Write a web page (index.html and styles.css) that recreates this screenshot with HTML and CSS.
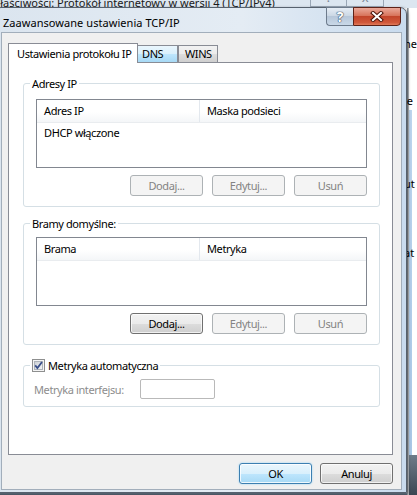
FILE: index.html
```html
<!DOCTYPE html>
<html lang="pl">
<head>
<meta charset="utf-8">
<title>Zaawansowane ustawienia TCP/IP</title>
<link rel="stylesheet" href="styles.css">
</head>
<body>
<div class="desktop">
  <!-- owner window behind the dialog -->
  <div class="owner">
    <div class="owner-caption">
      <span class="owner-title">Właściwości: Protokół internetowy w wersji 4 (TCP/IPv4)</span>
      <div class="owner-buttons">
        <span class="ocap">?</span>
        <span class="ocap">x</span>
      </div>
    </div>
    <div class="owner-body">
      <div class="owner-fill"></div>
      <div class="owner-side">
        <div class="frag frag-1">he</div>
        <div class="frag frag-2">le</div>
        <div class="frag frag-3">ut</div>
        <div class="frag frag-4">at</div>
      </div>
    </div>
  </div>

  <!-- advanced TCP/IP dialog -->
  <div class="dialog">
    <div class="titlebar">
      <span class="title">Zaawansowane ustawienia TCP/IP</span>
      <div class="caption-buttons">
        <button class="cap cap-help" type="button"><span>?</span></button>
        <button class="cap cap-close" type="button">
          <svg width="14" height="11" viewBox="0 0 14 11">
            <path d="M3 2l8 7M11 2l-8 7" stroke="#4a1208" stroke-width="4" stroke-linecap="square" fill="none"/>
            <path d="M3 2l8 7M11 2l-8 7" stroke="#ffffff" stroke-width="2" stroke-linecap="square" fill="none"/>
          </svg>
        </button>
      </div>
    </div>

    <div class="client">
      <div class="tabs">
        <div class="tab tab-active">Ustawienia protokołu IP</div>
        <div class="tab tab-hot">DNS</div>
        <div class="tab">WINS</div>
      </div>

      <div class="page">
        <fieldset class="group group-ip">
          <legend>Adresy IP</legend>
          <div class="listview">
            <div class="lv-header">
              <div class="lv-col lv-col-1">Adres IP</div>
              <div class="lv-col">Maska podsieci</div>
            </div>
            <div class="lv-row">DHCP włączone</div>
          </div>
          <div class="btn-row">
            <button class="btn" type="button" disabled>Dodaj...</button>
            <button class="btn" type="button" disabled>Edytuj...</button>
            <button class="btn" type="button" disabled>Usuń</button>
          </div>
        </fieldset>

        <fieldset class="group group-gw">
          <legend>Bramy domyślne:</legend>
          <div class="listview">
            <div class="lv-header">
              <div class="lv-col lv-col-1">Brama</div>
              <div class="lv-col">Metryka</div>
            </div>
          </div>
          <div class="btn-row">
            <button class="btn" type="button">Dodaj...</button>
            <button class="btn" type="button" disabled>Edytuj...</button>
            <button class="btn" type="button" disabled>Usuń</button>
          </div>
        </fieldset>

        <fieldset class="group group-metric">
          <legend class="check-legend">
            <span class="checkbox">
              <svg width="13" height="13" viewBox="0 0 13 13">
                <defs>
                  <linearGradient id="cbFill" x1="0" y1="0" x2="1" y2="1">
                    <stop offset="0" stop-color="#cbcfd5"/>
                    <stop offset="1" stop-color="#f6f6f6"/>
                  </linearGradient>
                </defs>
                <rect x="0.5" y="0.5" width="12" height="12" fill="#f4f4f4" stroke="#8e8f8f"/>
                <rect x="2.5" y="2.5" width="8" height="8" fill="url(#cbFill)" stroke="#aeb3b9"/>
                <path d="M3.2 6.4l2.2 2.6 4.6-6" fill="none" stroke="#3a4f8a" stroke-width="1.8"/>
              </svg>
            </span>
            Metryka automatyczna
          </legend>
          <div class="metric-row">
            <span class="metric-label">Metryka interfejsu:</span>
            <span class="textbox"></span>
          </div>
        </fieldset>
      </div>

      <div class="footer">
        <button class="btn btn-default" type="button">OK</button>
        <button class="btn" type="button">Anuluj</button>
      </div>
    </div>
  </div>
</div>
</body>
</html>
```

FILE: styles.css
```css
* { box-sizing: border-box; }

html, body {
  margin: 0;
  padding: 0;
}

body {
  width: 417px;
  height: 495px;
  overflow: hidden;
  font-family: "Noto Sans", "Segoe UI", sans-serif;
  font-size: 11px;
  letter-spacing: -0.4px;
  color: #000;
  background: #4b5966;
}

.desktop {
  position: relative;
  width: 417px;
  height: 495px;
  overflow: hidden;
}

/* ---------- owner window ---------- */
.owner {
  position: absolute;
  inset: 0;
  display: flex;
  flex-direction: column;
}

.owner-caption {
  height: 8px;
  flex: none;
  display: flex;
  justify-content: space-between;
  background: #dce6f0;
  overflow: hidden;
}

.owner-title {
  margin: -5px 0 0 -10px;
  line-height: 15px;
  white-space: nowrap;
  letter-spacing: 0;
  color: #1a1a1a;
}

.owner-buttons {
  display: flex;
  margin-right: 33px;
}

.ocap {
  width: 37px;
  height: 18px;
  margin-top: -11px;
  border: 1px solid #9aa7b6;
  border-top: none;
  text-align: center;
  line-height: 16px;
  font-size: 13px;
  color: #7b8797;
}

.ocap + .ocap { border-left: none; }

.owner-body {
  flex: 1;
  display: flex;
}

.owner-fill {
  flex: 1;
  background: linear-gradient(to bottom, #ffffff 0, #ffffff 481px, #9fb8d0 484px, #4b5966 487px);
}

.owner-side {
  width: 10px;
  display: flex;
  flex-direction: column;
  letter-spacing: 0;
  background:
    linear-gradient(to right, #7d858d, #c8ccd0) 0 0 / 2px 100% no-repeat,
    linear-gradient(#bcd5ee, #a9c7e6) 2px 102px / 3px 345px no-repeat,
    linear-gradient(#6e7c89, #3b4753) 0 447px / 10px 40px no-repeat,
    #ffffff;
}

.frag {
  line-height: 15px;
  margin-left: -3px;
  white-space: nowrap;
}

.frag-1 { margin-top: 28px; }
.frag-2 { margin-top: 42px; }
.frag-3 { margin-top: 68px; }
.frag-4 { margin-top: 54px; }

/* ---------- dialog frame ---------- */
.dialog {
  position: absolute;
  left: -6px;
  top: 7px;
  width: 413px;
  height: 486px;
  display: flex;
  flex-direction: column;
  padding: 0 5px 3px 7px;
  border: 1px solid #56616e;
  border-radius: 7px 7px 0 0;
  background: linear-gradient(to right, #dbe5ef 0, #e4ecf4 60%, #c9dbee 100%);
  box-shadow: 1px 1px 3px rgba(0, 0, 0, 0.45);
}

.titlebar {
  height: 25px;
  flex: none;
  display: flex;
  align-items: flex-start;
}

.title {
  margin: 7px 0 0 1px;
  line-height: 15px;
  white-space: nowrap;
  letter-spacing: 0.05px;
}

.caption-buttons {
  margin-left: auto;
  margin-top: -1px;
  display: flex;
}

.cap {
  height: 19px;
  padding: 0;
  margin: 0;
  display: flex;
  align-items: center;
  justify-content: center;
  font-family: inherit;
}

.cap-help {
  width: 27px;
  border: 1px solid #6d7b8c;
  border-right: none;
  border-radius: 0 0 0 4px;
  background: linear-gradient(to bottom, #e6edf5 0, #ccd8e5 45%, #b7c7d9 50%, #c9d8e8 100%);
}

.cap-help span {
  font-size: 14px;
  font-weight: bold;
  line-height: 14px;
  color: #ffffff;
  text-shadow: 0 0 1px #34475e, 0 0 1px #34475e, 0 0 1px #34475e;
}

.cap-close {
  width: 48px;
  border: 1px solid #5d2218;
  border-radius: 0 0 4px 0;
  background: linear-gradient(to bottom, #eaa99a 0, #d8745c 45%, #c2452b 50%, #d0583b 85%, #e07a5a 100%);
}

/* ---------- client area ---------- */
.client {
  flex: 1;
  display: flex;
  flex-direction: column;
  padding: 10px 8px 0 6px;
  background: #f0f0f0;
  box-shadow: 0 0 0 1px #a2aebb;
}

.tabs {
  height: 19px;
  flex: none;
  display: flex;
  align-items: flex-end;
  position: relative;
  z-index: 1;
}

.tab {
  height: 17px;
  padding: 0 0 0 4px;
  border: 1px solid #898c95;
  border-bottom: none;
  line-height: 16px;
  white-space: nowrap;
  background: linear-gradient(to bottom, #f2f2f2 0, #ebebeb 50%, #dddddd 51%, #cfcfcf 100%);
}

.tab-hot {
  width: 41px;
  margin-left: -1px;
  background: linear-gradient(to bottom, #eaf6fd 0, #d9f0fc 50%, #bee6fd 51%, #a7d9f5 100%);
}

.tab-hot + .tab {
  width: 40px;
  margin-left: 0;
  padding-left: 6px;
}

.tab-active {
  width: 130px;
  height: 20px;
  margin-bottom: -1px;
  padding-left: 8px;
  line-height: 19px;
  background: #ffffff;
  position: relative;
  z-index: 2;
}

.page {
  width: 385px;
  height: 393px;
  flex: none;
  border: 1px solid #898c95;
  background: #ffffff;
  padding: 13px 12px 0 14px;
}

/* ---------- group boxes ---------- */
.group {
  margin: 0;
  border: 1px solid #d5dfe5;
  border-radius: 3px;
  padding: 8px 12px 10px;
  min-width: 0;
}

.group legend {
  padding: 0 2px;
  margin-left: -6px;
  line-height: 15px;
}

.group-gw {
  margin-top: 9px;
  padding-top: 6px;
}

.group-metric {
  margin-top: 13px;
  padding: 6px 10px 7px;
}

.group-metric .check-legend {
  margin-left: -4px;
  display: flex;
  align-items: center;
  gap: 3px;
}

.checkbox {
  display: flex;
  width: 13px;
  height: 13px;
}

/* ---------- list views ---------- */
.listview {
  height: 69px;
  border: 1px solid #828790;
  background: #ffffff;
}

.lv-header {
  height: 23px;
  display: flex;
  background: linear-gradient(to bottom, #ffffff 0, #ffffff 55%, #f4f6f8 100%);
  border-bottom: 1px solid #e9ecef;
}

.lv-col {
  padding-left: 7px;
  line-height: 22px;
  white-space: nowrap;
}

.lv-col-1 {
  width: 163px;
  border-right: 1px solid #e3e8ee;
}

.lv-row {
  padding-left: 7px;
  line-height: 18px;
  margin-top: 1px;
}

/* ---------- buttons ---------- */
.btn-row {
  display: flex;
  justify-content: flex-end;
  gap: 9px;
  margin-top: 7px;
}

.btn {
  width: 73px;
  height: 21px;
  margin: 0;
  padding: 0;
  font-family: inherit;
  font-size: 11px;
  letter-spacing: inherit;
  color: #000;
  border: 1px solid #707070;
  border-radius: 3px;
  background: linear-gradient(to bottom, #f2f2f2 0, #ebebeb 50%, #dddddd 51%, #cfcfcf 100%);
  box-shadow: inset 0 0 0 1px rgba(255, 255, 255, 0.7);
}

.btn:disabled {
  color: #838383;
  border-color: #adb2b5;
  background: #f4f4f4;
  box-shadow: none;
}

.btn-default {
  border-color: #3c7fb1;
  background: linear-gradient(to bottom, #eaf6fd 0, #d9f0fc 50%, #bee6fd 51%, #a7d9f5 100%);
  box-shadow: inset 0 0 0 1px rgba(255, 255, 255, 0.8), 0 0 2px #8fd0f5;
}

/* ---------- metric row ---------- */
.metric-row {
  display: flex;
  align-items: center;
  height: 20px;
}

.metric-label {
  width: 106px;
  color: #8d8d8d;
  white-space: nowrap;
}

.textbox {
  width: 75px;
  height: 20px;
  border: 1px solid #b9b9b9;
  border-radius: 2px;
  background: #ffffff;
}

/* ---------- footer ---------- */
.footer {
  display: flex;
  justify-content: flex-end;
  gap: 8px;
  padding-top: 8px;
}
```
